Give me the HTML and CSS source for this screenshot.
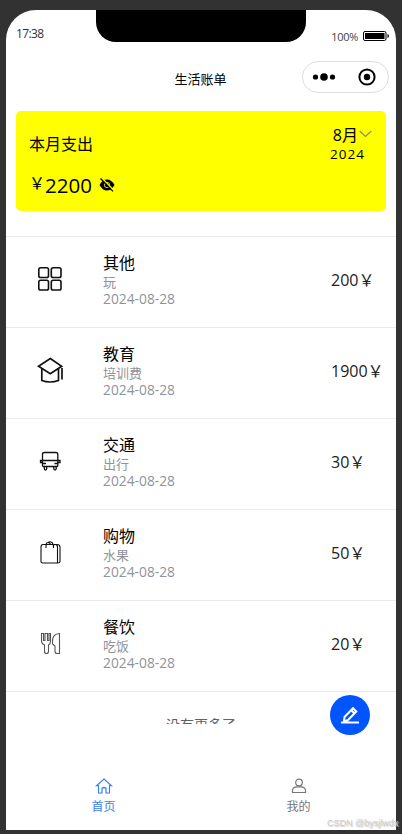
FILE: index.html
```html
<!DOCTYPE html>
<html lang="zh-CN">
<head>
<meta charset="utf-8">
<title>生活账单</title>
<link rel="stylesheet" href="styles.css">
</head>
<body>
<div class="phone">
  <div class="status">
    <span class="time">17:38</span>
    <div class="notch"></div>
    <div class="power">
      <span>100%</span>
      <svg width="27" height="10" viewBox="0 0 27 10"><rect x=".5" y=".5" width="22.5" height="9" rx="1.5" fill="none" stroke="#000"/><rect x="2" y="2" width="19.5" height="6" fill="#000"/><path d="M24.500 3q1.500 .5 1.500 2t-1.500 2z" fill="#000"/></svg>
    </div>
  </div>
  <header class="nav">
    <h1>生活账单</h1>
    <div class="capsule">
      <svg width="24" height="10" viewBox="0 0 24 10"><circle cx="3.500" cy="5" r="2.600"/><circle cx="12" cy="5" r="3.800"/><circle cx="20.500" cy="5" r="2.600"/></svg>
      <svg width="18" height="18" viewBox="0 0 18 18"><circle cx="9" cy="9" r="7.600" fill="none" stroke="#000" stroke-width="2"/><circle cx="9" cy="9" r="3.200"/></svg>
    </div>
  </header>
  <section class="card">
    <div class="summary">
      <div class="label">本月支出</div>
      <div class="total"><span class="yen">￥</span><span class="sum">2200</span>
        <svg class="eye" width="16" height="14" viewBox="0 0 16 14"><path d="M.5 7Q3.500 1.500 8 1.500T15.500 7Q12.500 12.500 8 12.500T.5 7z"/><circle cx="8" cy="7" r="2.700" fill="none" stroke="#ff0" stroke-width=".8"/><path d="M2.800 0L15 12.500" stroke="#ff0" stroke-width="1.300"/><path d="M1.500 .5L14 13.300" stroke="#000" stroke-width="1.200"/></svg>
      </div>
    </div>
    <div class="period">
      <div class="month">8月<svg width="13" height="8" viewBox="0 0 13 8"><path d="M.7 1L6.500 6.500L12.300 1" fill="none" stroke="#858a72" stroke-width="1.200"/></svg></div>
      <div class="year">2024</div>
    </div>
  </section>
  <main class="list">
    <div class="row">
      <div class="icon"><svg width="26" height="26" viewBox="0 0 26 26"><g stroke-width="1.600"><rect x="1.800" y="1.800" width="9.700" height="9.700" rx="1.800"/><rect x="14.300" y="1.800" width="9.700" height="9.700" rx="1.800"/><rect x="1.800" y="14.300" width="9.700" height="9.700" rx="1.800"/><rect x="14.300" y="14.300" width="9.700" height="9.700" rx="1.800"/></g></svg></div>
      <div class="info"><b>其他</b><span>玩</span><time>2024-08-28</time></div>
      <div class="amount">200￥</div>
    </div>
    <div class="row">
      <div class="icon"><svg width="26" height="26" viewBox="0 0 26 26"><path stroke-width="1.700" d="M13.300 1.500L24.700 9.300L13.300 16.700L1.500 9.300zM4.800 12V23.500Q13 26.500 21.500 23.500V12M25 11V22.500"/></svg></div>
      <div class="info"><b>教育</b><span>培训费</span><time>2024-08-28</time></div>
      <div class="amount">1900￥</div>
    </div>
    <div class="row">
      <div class="icon"><svg width="26" height="26" viewBox="0 0 26 26"><path stroke-width="1.300" d="M5.500 12.500V6Q5.500 4.500 7.500 4.500H18.800Q20.800 4.500 20.800 6V12.500M5.500 12.500H20.800M5.500 12.500H3.500V14.500H5.500M20.800 12.500H23V14.500H20.800M5.500 12.500V17.500Q5.500 18.500 6.500 18.500H20Q20.800 18.500 20.800 17.500V12.500M5.500 15.500H9M20.800 15.500H17.500M7.300 18.500V20.500Q7.300 22 8.500 22T9.700 20.500V18.500M16.800 18.500V20.500Q16.800 22 18 22T19.200 20.500V18.500"/></svg></div>
      <div class="info"><b>交通</b><span>出行</span><time>2024-08-28</time></div>
      <div class="amount">30￥</div>
    </div>
    <div class="row">
      <div class="icon"><svg width="26" height="26" viewBox="0 0 26 26"><path stroke-width="1.100" d="M19.500 24H5.500Q4 24 4 22.500V8Q4 5.500 6 5.500H18Q20.500 5.500 20.500 8V24M18 5.500H20Q23 5.500 23 8V22.500Q23 24 21 24H19M9 9V6.500Q9 3.500 11 3.500T13.500 5.500M11 3.500Q13 2 15 3.500Q17 5.500 16.500 9"/></svg></div>
      <div class="info"><b>购物</b><span>水果</span><time>2024-08-28</time></div>
      <div class="amount">50￥</div>
    </div>
    <div class="row">
      <div class="icon"><svg class="gray" width="26" height="26" viewBox="0 0 26 26"><path stroke-width="1.100" d="M4.500 3.500H6.500V10.500H8V3.500H10.500V10.500H12V3.500H13.500V11Q13.500 14 11.500 15V21.500Q11.500 23.500 9.500 23.500T7.500 21.500V15Q4.500 14 4.500 11zM20 23.500H22.500V3.500Q15.500 4 15.500 11V14L18 16V21.500Q18 23.500 20 23.500z"/></svg></div>
      <div class="info"><b>餐饮</b><span>吃饭</span><time>2024-08-28</time></div>
      <div class="amount">20￥</div>
    </div>
    <div class="end">没有更多了</div>
  </main>
  <nav class="tabs">
    <div class="tab active"><svg width="18" height="16" viewBox="0 0 18 16"><path d="M1.500 7.700L9 1L16.500 7.700H14.500V15H11V10.500Q9 8.500 7 10.500V15H3.500V7.700z" /></svg><span>首页</span></div>
    <div class="tab"><svg width="18" height="16" viewBox="0 0 18 16"><circle cx="9" cy="4.500" r="3.300"/><path d="M2.500 14.500V12Q3 9 7 8.800H11Q15 9 15.500 12V14.500z"/></svg><span>我的</span></div>
  </nav>
  <button class="add" aria-label="记一笔"><svg width="20" height="20" viewBox="0 0 20 20"><path d="M1 17.500H19M4 16L4.500 12L13 3.200L16.300 6.500L7.800 15.300zM11 5L14.300 8.300"/></svg></button>
</div>
<div class="watermark">CSDN @bysjlwdx</div>
</body>
</html>
```
FILE: styles.css
```css
* { box-sizing: border-box; }
body {
  margin: 0;
  width: 402px;
  height: 834px;
  overflow: hidden;
  padding: 10px 6px 4px;
  background: #323232;
  color: #000;
  font-family: "Open Sans", "Noto Sans CJK SC", sans-serif;
}
svg { display: block; flex: none; }
.phone {
  position: relative;
  width: 390px;
  height: 820px;
  background: #fff;
  border-radius: 30px 30px 0 0;
  overflow: hidden;
  display: flex;
  flex-direction: column;
}
.status { height: 45px; display: flex; justify-content: space-between; align-items: flex-start; flex: none; }
.time { width: 90px; padding: 16px 0 0 10px; font-size: 12px; line-height: 16px; letter-spacing: -.6px; color: #333; }
.notch { width: 210px; height: 32px; background: #000; border-radius: 0 0 20px 20px; }
.power { width: 90px; display: flex; align-items: center; justify-content: flex-end; gap: 5px; padding: 17px 6px 0 0; font-size: 11px; line-height: 16px; color: #444; letter-spacing: -.3px; }
.power span { padding-top: 2px; }
.power svg { margin-top: -1px; }
.nav { height: 46px; flex: none; display: grid; grid-template-columns: 1fr auto 1fr; align-items: center; padding: 0 7px 0 0; }
.nav h1 { grid-column: 2; margin: 2px -6px 0 0; font-size: 13px; font-weight: 400; line-height: 20px; }
.capsule { justify-self: end; width: 87px; height: 32px; margin-top: -2px; border: 1px solid #ddd; border-radius: 16px; display: flex; align-items: center; justify-content: space-between; padding: 0 12px 0 9px; }
.card { flex: none; height: 100px; margin: 10px 10px 25px; background: #ff0; border-radius: 5px; display: flex; justify-content: space-between; padding: 0 13px; }
.label { margin-top: 22px; font-size: 16px; line-height: 22px; }
.total { display: flex; align-items: flex-start; margin-top: 16px; }
.yen { font-size: 16px; line-height: 24px; }
.sum { font-size: 20.5px; line-height: 28px; }
.eye { margin: 7px 0 0 7px; }
.period { padding-top: 14px; width: 43px; }
.month { display: flex; align-items: center; justify-content: flex-end; gap: 1px; height: 20px; font-size: 16px; line-height: 20px; white-space: nowrap; }
.month svg { margin: -2px 1px 0 0; }
.year { font-size: 13.500px; line-height: 18px; letter-spacing: 1px; }
.list { height: 488px; flex: none; overflow: hidden; }
.row { height: 91px; border-top: 1px solid #ebebeb; display: flex; }
.icon { width: 97px; padding: 29px 0 0 31px; }
.icon svg { fill: none; stroke: #111; }
.icon svg.gray { stroke: #555; }
.info { width: 228px; padding-top: 16px; display: flex; flex-direction: column; }
.info b { font-size: 16px; font-weight: 400; line-height: 21px; height: 20px; }
.info span { font-size: 13px; line-height: 18px; height: 17px; color: #909399; }
.info time { font-size: 13.800px; line-height: 17px; color: #909399; }
.amount { padding-top: 32px; font-size: 16px; line-height: 22px; color: #222; white-space: nowrap; }
.end { border-top: 1px solid #ebebeb; padding-top: 23px; text-align: center; font-size: 14px; line-height: 20px; color: #606266; }
.tabs { flex: 1; display: flex; padding-top: 54px; }
.tab { flex: 1; display: flex; flex-direction: column; align-items: center; font-size: 12px; line-height: 18px; color: #777; gap: 4px; }
.tab svg { fill: none; stroke: currentColor; stroke-width: 1.200; }
.tab.active { color: #3a83ee; }
.add { position: absolute; left: 324px; top: 685px; width: 40px; height: 40px; border: 0; border-radius: 50%; background: #0055ff; display: flex; align-items: center; justify-content: center; padding: 0; }
.add svg { fill: none; stroke: #fff; stroke-width: 2; }
.watermark { position: absolute; left: 327px; top: 817px; font: 9px/12px "Liberation Sans", sans-serif; color: #ccc; text-shadow: 1px 1px 1px #ccc; white-space: nowrap; }
```
